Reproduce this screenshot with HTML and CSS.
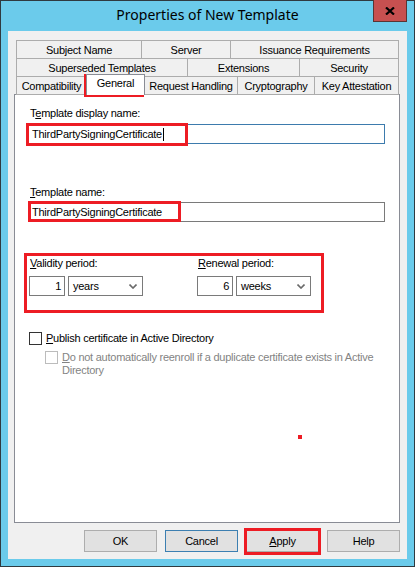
FILE: index.html
```html
<!DOCTYPE html>
<html lang="en">
<head>
  <meta charset="UTF-8" />
  <title>Properties of New Template</title>
  <link rel="stylesheet" href="styles.css">
</head>
<body>

  <div class="window">
    <div class="titlebar">
      <span></span>
      <div class="title">Properties of New Template</div>
      <div class="close-cell">
        <div class="close">
          <svg width="10" height="8" viewBox="0 0 10 8"><path d="M1 0.5 L9 7.5 M9 0.5 L1 7.5" stroke="#000" stroke-width="2.2" fill="none"/></svg>
        </div>
      </div>
    </div>

    <div class="client">
      <div class="tabs">
        <div class="tab-row">
          <div class="tab" style="width:126px">Subject Name</div>
          <div class="tab" style="width:90px">Server</div>
          <div class="tab last">Issuance Requirements</div>
        </div>
        <div class="tab-row">
          <div class="tab" style="width:172px">Superseded Templates</div>
          <div class="tab" style="width:113px">Extensions</div>
          <div class="tab last">Security</div>
        </div>
        <div class="tab-row">
          <div class="tab" style="width:71px">Compatibility</div>
          <div class="tab selected" style="width:59px">General</div>
          <div class="tab" style="width:94px">Request Handling</div>
          <div class="tab" style="width:78px">Cryptography</div>
          <div class="tab last">Key Attestation</div>
        </div>
      </div>

      <div class="panel">
        <div class="field">
          <div class="label">T<u>e</u>mplate display name:</div>
          <div class="textbox focused">ThirdPartySigningCertificate<span class="caret"></span></div>
        </div>

        <div class="field second">
          <div class="label"><u>T</u>emplate name:</div>
          <div class="textbox">ThirdPartySigningCertificate</div>
        </div>

        <div class="periods">
          <div class="period">
            <div class="label"><u>V</u>alidity period:</div>
            <div class="period-inputs">
              <div class="number">1</div>
              <div class="dropdown">years
                <svg width="8" height="5" viewBox="0 0 8 5"><path d="M0.5 0.5 L4 4 L7.5 0.5" stroke="#6a6a6a" stroke-width="1.6" fill="none"/></svg>
              </div>
            </div>
          </div>
          <div class="period">
            <div class="label"><u>R</u>enewal period:</div>
            <div class="period-inputs">
              <div class="number">6</div>
              <div class="dropdown">weeks
                <svg width="8" height="5" viewBox="0 0 8 5"><path d="M0.5 0.5 L4 4 L7.5 0.5" stroke="#6a6a6a" stroke-width="1.6" fill="none"/></svg>
              </div>
            </div>
          </div>
        </div>

        <div class="check">
          <span class="box"></span>
          <span><u>P</u>ublish certificate in Active Directory</span>
        </div>
        <div class="check sub disabled">
          <span class="box"></span>
          <span class="check-text">Do not automatically reenroll if a duplicate certificate exists in Active Directory</span>
        </div>
      </div>

      <div class="buttons">
        <button>OK</button>
        <button class="default">Cancel</button>
        <button><u>A</u>pply</button>
        <button>Help</button>
      </div>
    </div>

    <!-- red annotations -->
    <div class="mark" style="left:83px; top:73px; width:60px; height:23px"></div>
    <div class="mark" style="left:25px; top:122px; width:162px; height:23px"></div>
    <div class="mark" style="left:27px; top:200px; width:153px; height:21px"></div>
    <div class="mark" style="left:23px; top:252px; width:300px; height:60px"></div>
    <div class="mark" style="left:243px; top:527px; width:77px; height:27px"></div>
    <div class="dot"></div>
  </div>

</body>
</html>
```

FILE: styles.css
```css
* {
  box-sizing: border-box;
}
body {
  margin: 0;
  padding: 0;
  background-color: #6bcbeb;
  font-family: 'Liberation Sans', Arial, sans-serif;
  font-size: 11px;
  letter-spacing: -0.25px;
  color: #000;
}

.window {
  position: relative;
  width: 415px;
  height: 567px;
  border: 1px solid #2f3a40;
  background-color: #6bcbeb;
  padding: 0 7px 7px;
  display: flex;
  flex-direction: column;
}

.titlebar {
  height: 30px;
  display: grid;
  grid-template-columns: 1fr auto 1fr;
}
.title {
  font-family: 'Noto Sans', sans-serif;
  font-size: 14px;
  letter-spacing: 0;
  line-height: 20px;
  padding-top: 4px;
  color: #000;
}
.close-cell {
  display: flex;
  justify-content: flex-end;
  align-items: flex-start;
}
.close {
  margin-top: -1px;
  width: 34px;
  height: 22px;
  background-color: #c75050;
  border: 1px solid #5b3434;
  border-top: none;
  display: flex;
  align-items: center;
  justify-content: center;
}

.client {
  flex: 1;
  background-color: #f0f0f0;
  padding: 9px 7px 0 6px;
}

.tabs {
  margin: 0 1px 0 2px;
}
.tab-row {
  display: flex;
  height: 19px;
  align-items: flex-end;
}
.tab-row + .tab-row {
  margin-top: -1px;
}
.tab {
  height: 19px;
  border: 1px solid #acacac;
  background-color: #f0f0f0;
  text-align: center;
  padding-top: 1px;
  line-height: 16px;
  white-space: nowrap;
}
.tab + .tab {
  margin-left: -1px;
}
.tab.last {
  flex: 1;
}
.tab.selected {
  position: relative;
  z-index: 1;
  height: 21px;
  background-color: #fff;
  border-color: #898c95;
  border-bottom: none;
  line-height: 15px;
}

.panel {
  margin-top: -1px;
  height: 429px;
  background-color: #fff;
  border: 1px solid #898c95;
  padding: 12px 0 0 13px;
}

.label {
  line-height: 13px;
  padding-left: 2px;
}

.field {
  width: 357px;
}
.field.second {
  margin-top: 42px;
}
.textbox {
  margin-top: 4px;
  height: 20px;
  border: 1px solid #7a7a7a;
  padding-left: 3px;
  line-height: 18px;
  display: flex;
  align-items: center;
}
.field.second .textbox {
  margin-top: 3px;
}
.textbox.focused {
  border-color: #3d7bad;
}
.caret {
  display: inline-block;
  width: 1px;
  height: 13px;
  background-color: #000;
  margin-left: 1px;
}

.periods {
  margin-top: 35px;
  margin-left: 1px;
  display: flex;
}
.period {
  width: 168px;
}
.period .label {
  padding-left: 1px;
}
.period-inputs {
  margin-top: 6px;
  display: flex;
  gap: 3px;
}
.number {
  width: 36px;
  height: 20px;
  border: 1px solid #7a7a7a;
  text-align: right;
  padding-right: 3px;
  line-height: 18px;
}
.dropdown {
  width: 75px;
  height: 20px;
  border: 1px solid #7a7a7a;
  padding: 0 5px 0 4px;
  line-height: 18px;
  display: flex;
  justify-content: space-between;
  align-items: center;
}

.check {
  margin-top: 36px;
  margin-left: 1px;
  display: flex;
  gap: 4px;
  line-height: 13px;
}
.check .box {
  flex: none;
  width: 13px;
  height: 13px;
  border: 1px solid #333;
  background-color: #fff;
}
.check.sub {
  margin-top: 6px;
  margin-left: 17px;
}
.check-text {
  width: 330px;
}
.check-text::first-letter {
  text-decoration: underline;
}
.check.disabled {
  color: #838383;
}
.check.disabled .box {
  border-color: #bcbcbc;
}

.buttons {
  margin-top: 7px;
  display: flex;
  justify-content: flex-end;
  gap: 8px;
}
button {
  width: 73px;
  height: 22px;
  padding: 0;
  font-family: 'Liberation Sans', Arial, sans-serif;
  font-size: 11px;
  letter-spacing: -0.25px;
  color: #000;
  background-color: #e1e1e1;
  border: 1px solid #adadad;
}
button.default {
  border-color: #3c7fb1;
}

.mark {
  position: absolute;
  border: 3px solid #ed1c24;
}
.dot {
  position: absolute;
  left: 297px;
  top: 434px;
  width: 4px;
  height: 4px;
  background-color: #ed1c24;
}
```
